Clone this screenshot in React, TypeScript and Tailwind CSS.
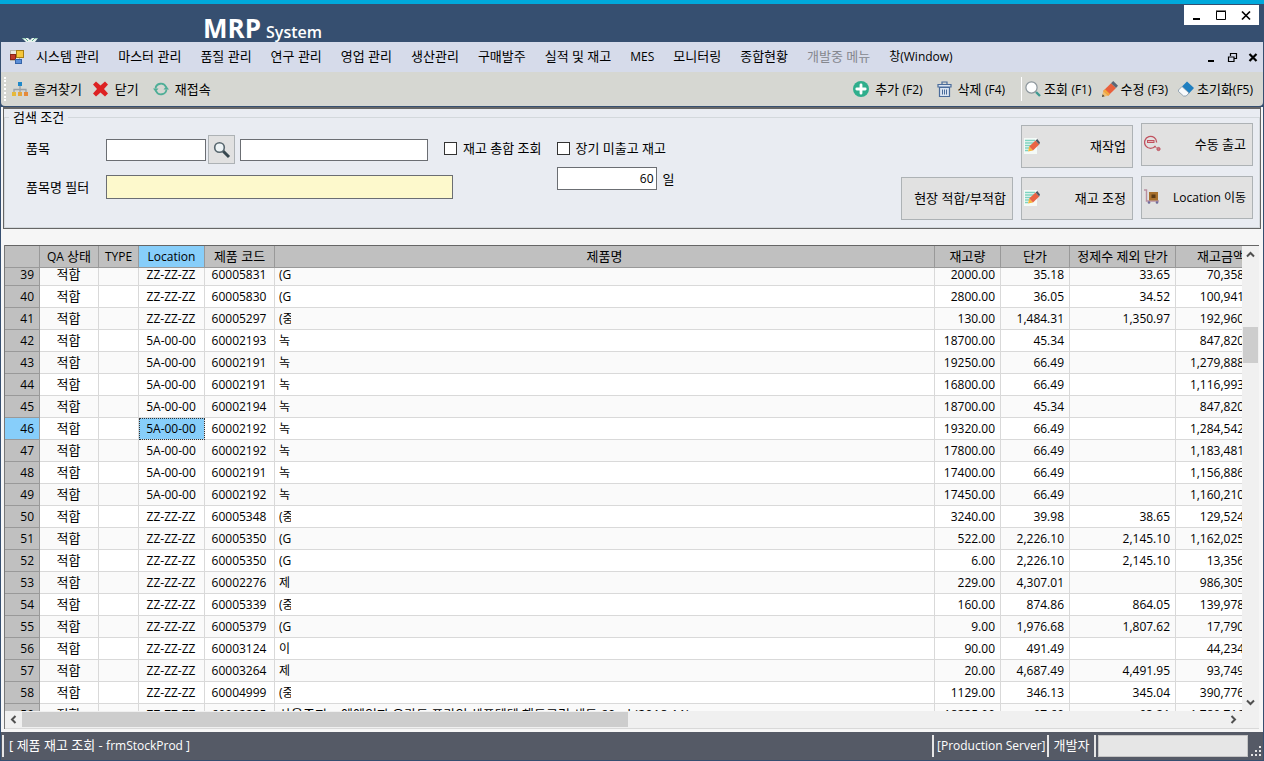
import { useLayoutEffect, useRef, type ReactNode } from "react";
import clsx from "clsx";

const FONT = "font-['Open_Sans','Noto_Sans_CJK_KR',sans-serif]";

const menus = [
    "시스템 관리", "마스터 관리", "품질 관리", "연구 관리", "영업 관리", "생산관리", "구매발주",
    "실적 및 재고", "MES", "모니터링", "종합현황", "개발중 메뉴", "창(Window)",
];

interface StockRow {
    no: number;
    location: string;
    code: string;
    name: string;
    qty: string;
    price: string;
    netPrice: string;
    amount: string;
}

const Z = "ZZ-ZZ-ZZ";
const A = "5A-00-00";

const rows: StockRow[] = [
    { no: 39, location: Z, code: "60005831", name: "(G", qty: "2000.00", price: "35.18", netPrice: "33.65", amount: "70,358.00" },
    { no: 40, location: Z, code: "60005830", name: "(G", qty: "2800.00", price: "36.05", netPrice: "34.52", amount: "100,941.00" },
    { no: 41, location: Z, code: "60005297", name: "(중", qty: "130.00", price: "1,484.31", netPrice: "1,350.97", amount: "192,960.00" },
    { no: 42, location: A, code: "60002193", name: "녹", qty: "18700.00", price: "45.34", netPrice: "", amount: "847,820.00" },
    { no: 43, location: A, code: "60002191", name: "녹", qty: "19250.00", price: "66.49", netPrice: "", amount: "1,279,888.00" },
    { no: 44, location: A, code: "60002191", name: "녹", qty: "16800.00", price: "66.49", netPrice: "", amount: "1,116,993.00" },
    { no: 45, location: A, code: "60002194", name: "녹", qty: "18700.00", price: "45.34", netPrice: "", amount: "847,820.00" },
    { no: 46, location: A, code: "60002192", name: "녹", qty: "19320.00", price: "66.49", netPrice: "", amount: "1,284,542.00" },
    { no: 47, location: A, code: "60002192", name: "녹", qty: "17800.00", price: "66.49", netPrice: "", amount: "1,183,481.00" },
    { no: 48, location: A, code: "60002191", name: "녹", qty: "17400.00", price: "66.49", netPrice: "", amount: "1,156,886.00" },
    { no: 49, location: A, code: "60002192", name: "녹", qty: "17450.00", price: "66.49", netPrice: "", amount: "1,160,210.00" },
    { no: 50, location: Z, code: "60005348", name: "(중", qty: "3240.00", price: "39.98", netPrice: "38.65", amount: "129,524.00" },
    { no: 51, location: Z, code: "60005350", name: "(G", qty: "522.00", price: "2,226.10", netPrice: "2,145.10", amount: "1,162,025.00" },
    { no: 52, location: Z, code: "60005350", name: "(G", qty: "6.00", price: "2,226.10", netPrice: "2,145.10", amount: "13,356.00" },
    { no: 53, location: Z, code: "60002276", name: "제", qty: "229.00", price: "4,307.01", netPrice: "", amount: "986,305.00" },
    { no: 54, location: Z, code: "60005339", name: "(중", qty: "160.00", price: "874.86", netPrice: "864.05", amount: "139,978.00" },
    { no: 55, location: Z, code: "60005379", name: "(G", qty: "9.00", price: "1,976.68", netPrice: "1,807.62", amount: "17,790.00" },
    { no: 56, location: Z, code: "60003124", name: "이", qty: "90.00", price: "491.49", netPrice: "", amount: "44,234.00" },
    { no: 57, location: Z, code: "60003264", name: "제", qty: "20.00", price: "4,687.49", netPrice: "4,491.95", amount: "93,749.00" },
    { no: 58, location: Z, code: "60004999", name: "(중", qty: "1129.00", price: "346.13", netPrice: "345.04", amount: "390,776.00" },
    { no: 59, location: Z, code: "60002235", name: "사용중지>. 엔엔인파 유라드 프라임 셀프텐텐 핸드크림 세트 60ml (2018.11)", qty: "18235.00", price: "97.60", netPrice: "93.21", amount: "1,780,716.00" },
];

const SELECTED = 46;

/* ---------- icons ---------- */

function AppIcon() {
    return (
        <svg width="15" height="14" viewBox="0 0 15 14">
            <rect x="0.5" y="0.5" width="9" height="10" fill="#ece9e2" stroke="#b9b5aa" />
            <rect x="6.5" y="0.5" width="7" height="7" fill="#f5c63b" stroke="#a67c14" />
            <rect x="0.5" y="4.5" width="5" height="5" fill="#c0392b" stroke="#8a2318" />
            <rect x="5.5" y="9.5" width="6" height="4" fill="#5b8fd8" stroke="#3564a8" />
        </svg>
    );
}

function SitemapIcon() {
    return (
        <svg width="16" height="16" viewBox="0 0 16 16">
            <path d="M8 5v6M2 11V8.500h12V11" fill="none" stroke="#9aa0a6" strokeWidth="1.300" />
            <rect x="6" y="1" width="4" height="4" fill="#1e88c9" />
            <rect x="0" y="11" width="4" height="4" fill="#e6b93b" />
            <rect x="6" y="11" width="4" height="4" fill="#e6a53b" />
            <rect x="12" y="11" width="4" height="4" fill="#e58a3a" />
        </svg>
    );
}

function CloseIcon() {
    return (
        <svg width="17" height="16" viewBox="0 0 17 16">
            <path d="M1 3.500 4 .5l4.500 4 4.500-4 3 3L12 8l4 4.500-3 3-4.500-4-4.500 4-3-3L5 8z" fill="#dd2222" />
        </svg>
    );
}

function ReconnectIcon() {
    return (
        <svg width="16" height="16" viewBox="0 0 16 16" fill="none" stroke="#4fae97" strokeWidth="1.800">
            <path d="M2.500 7.500a5.500 5.500 0 0 1 10.500-1.500M13.500 8.500a5.500 5.500 0 0 1-10.500 1.500" />
            <path d="M0 7.500h5.500L2.700 11zM16 8.500h-5.500l2.800-3.500z" fill="#4fae97" stroke="none" />
        </svg>
    );
}

function AddIcon() {
    return (
        <svg width="16" height="16" viewBox="0 0 16 16">
            <circle cx="8" cy="8" r="8" fill="#2fae8c" />
            <path d="M8 3.800v8.400M3.800 8h8.400" stroke="#fff" strokeWidth="2.800" strokeLinecap="round" />
        </svg>
    );
}

function TrashIcon() {
    return (
        <svg width="15" height="16" viewBox="0 0 15 16" fill="#dbe5f2" stroke="#4a6c9b">
            <path d="M2.500 6.500h10v9h-10z" strokeWidth="1.200" />
            <path d="M1 3.500h13v2.500H1z" strokeWidth="1.200" />
            <path d="M5 3V1h5v2" fill="none" strokeWidth="1.200" />
            <path d="M5.500 8.500v5M7.500 8.500v5M9.500 8.500v5" />
        </svg>
    );
}

function SearchIcon() {
    return (
        <svg width="16" height="16" viewBox="0 0 16 16">
            <path d="M11 11l4 4" stroke="#3f9a92" strokeWidth="2.400" />
            <circle cx="6.500" cy="6.500" r="5.600" fill="#fdfefe" stroke="#8c969c" strokeWidth="1.200" />
        </svg>
    );
}

function PencilIcon() {
    return (
        <svg width="16" height="16" viewBox="0 0 16 16">
            <path d="M0 16 1.200 10l5 4.800z" fill="#f0c070" />
            <path d="M0 16 .6 13.300l2 2z" fill="#444" />
            <path d="M1.200 10 9 2.200 14 7l-7.800 7.800z" fill="#e9603c" />
            <path d="M1.200 10 3 8.200 8 13l-1.800 1.800z" fill="#f3a93c" />
            <path d="M9 2.200 11.200 0 16 4.800 14 7z" fill="#5b6675" />
        </svg>
    );
}

function EraserIcon() {
    return (
        <svg width="16" height="16" viewBox="0 0 16 16">
            <path d="M9 .5 16 7l-5.500 6L3.500 6z" fill="#1f7fc0" />
            <path d="M4 5.500 11 12l-2.800 3H5.500L.5 10.500V9z" fill="#f7fafc" stroke="#7f93a3" strokeWidth=".8" />
        </svg>
    );
}

function LensIcon() {
    return (
        <svg width="18" height="18" viewBox="0 0 18 18">
            <path d="M10 10l6 6" stroke="#37474f" strokeWidth="3" />
            <circle cx="6.500" cy="6.500" r="4.800" fill="#eef4f6" stroke="#56656d" strokeWidth="1.600" />
        </svg>
    );
}

function NoteIcon() {
    return (
        <svg width="16" height="16" viewBox="0 0 16 16">
            <path d="M0 0h13v16H0z" fill="#f4faf7" />
            <path d="M1 2.500h10M1 5h9M1 7.500h7M1 10h4M1 12.500h3" stroke="#7ed3c0" strokeWidth="1.300" />
            <path d="M4 13.500 5.200 8.500 9 12.500z" fill="#f6b73c" />
            <path d="M5.200 8.500 11.500 2.500 15.200 6.400 9 12.500z" fill="#ea6443" />
            <path d="M11.500 2.500 13.300 1 16 4.500l-.8 1.900z" fill="#4f5662" />
        </svg>
    );
}

function ReleaseIcon() {
    return (
        <svg width="17" height="17" viewBox="0 0 17 17" fill="none" stroke="#c0525f">
            <path d="M11.500 10.800A6 6 0 1 1 12.600 7.500" strokeWidth="1.300" />
            <path d="M3 6.500h7.500" strokeWidth="3" />
            <path d="M4 6.500h5.500" stroke="#e7b5ba" />
            <circle cx="14.500" cy="14" r="1.600" fill="#c77a82" />
            <path d="M10.500 11l2 2" />
        </svg>
    );
}

function CartIcon() {
    return (
        <svg width="16" height="16" viewBox="0 0 16 16">
            <path d="M0 1h2.500v11H15" fill="none" stroke="#b98fa0" strokeWidth="1.400" />
            <rect x="5" y="3" width="9" height="8.500" fill="#a8702c" />
            <rect x="7.500" y="5.500" width="4" height="3.500" fill="#5b3a14" />
            <circle cx="5" cy="13.500" r="1.300" fill="#6f6b9a" />
            <circle cx="13" cy="13.500" r="1.300" fill="#6f6b9a" />
        </svg>
    );
}

function Chevron({ d }: { d: string }) {
    return (
        <svg width="9" height="9" viewBox="0 0 9 9">
            <path d={d} fill="none" stroke="#505050" strokeWidth="2" />
        </svg>
    );
}

/* ---------- parts ---------- */

function ToolButton({ icon, label, hotkey, gap = "gap-1.5" }: { icon: ReactNode; label: string; hotkey?: string; gap?: string }) {
    return (
        <button className={clsx("flex items-center whitespace-nowrap", gap)}>
            {icon}
            <span>
                {label}
                {hotkey && <span className="text-xs">{hotkey}</span>}
            </span>
        </button>
    );
}

function ActionButton({ icon, children }: { icon?: ReactNode; children: ReactNode }) {
    return (
        <button className="flex h-[43px] w-28 items-center border border-[#adb2b5] bg-[#e1e1e1] pr-1.5 pb-0.5 pl-0.5 whitespace-nowrap">
            {icon}
            <span className="flex-1 text-right">{children}</span>
        </button>
    );
}

function TitleBar() {
    return (
        <header className="flex h-[42px] shrink-0 items-start justify-between border-t-4 border-[#00a9dc] bg-[#364f70]">
            <div className="flex h-full items-end">
                <svg className="ml-[22px]" width="16" height="4" viewBox="0 0 16 4">
                    <path d="M0 0h6l2 2 2-2h6l-3 4H4z" fill="#e8f3ee" />
                    <path d="M0 0h3l3 3M16 0h-3l-3 3" fill="none" stroke="#59a58a" />
                </svg>
                <h1 className="ml-[165px] flex items-baseline gap-[5px] text-[26px] leading-7 font-bold text-white">
                    MRP <span className="text-base leading-5 font-semibold">System</span>
                </h1>
            </div>
            <div className="mt-px mr-[5px] flex h-5 w-[75px] items-center justify-around bg-white">
                <button aria-label="최소화">
                    <svg width="11" height="11" viewBox="0 0 11 11"><path d="M2 9h7" stroke="#000" strokeWidth="2" /></svg>
                </button>
                <button aria-label="최대화">
                    <svg width="11" height="11" viewBox="0 0 11 11"><path d="M.5 1.500h9v8h-9zM0 1h10" fill="none" stroke="#000" /></svg>
                </button>
                <button aria-label="닫기">
                    <svg width="11" height="11" viewBox="0 0 11 11"><path d="M1 1.500l8 8M9 1.500l-8 8" stroke="#000" strokeWidth="1.700" /></svg>
                </button>
            </div>
        </header>
    );
}

function MenuBar() {
    return (
        <nav className="flex h-[30px] shrink-0 items-center bg-[#d6dbea] pl-[9px]">
            <AppIcon />
            <ul className="ml-[11px] flex flex-1 gap-[19px] pb-0.5 whitespace-nowrap">
                {menus.map((menu) => (
                    <li key={menu}>
                        <button
                            disabled={menu === "개발중 메뉴"}
                            className={clsx("disabled:text-[#85878e]", /[A-Z]/.test(menu) && "text-xs")}
                        >
                            {menu}
                        </button>
                    </li>
                ))}
            </ul>
            <div className="flex gap-2.5 pr-[5px]">
                <button aria-label="창 최소화">
                    <svg width="11" height="11" viewBox="0 0 11 11"><path d="M2 9h6" stroke="#000" strokeWidth="2" /></svg>
                </button>
                <button aria-label="창 복원">
                    <svg width="11" height="11" viewBox="0 0 11 11"><path d="M3.500 4V1.500h6v5H7M3 1.500h7M1.500 5h5.500v4.500H1.500zM1 5h6.500" fill="none" stroke="#000" strokeWidth="1.200" /></svg>
                </button>
                <button aria-label="창 닫기">
                    <svg width="10" height="11" viewBox="0 0 10 11"><path d="M1.500 2l7 7M8.500 2l-7 7" stroke="#000" strokeWidth="2.200" /></svg>
                </button>
            </div>
        </nav>
    );
}

function ToolBar() {
    return (
        <div className="flex h-[34px] shrink-0 items-center rounded-b-sm bg-[#d6d7d2] pr-2.5 pb-px pl-[3px]">
            <div className="mr-1.5 h-6 border-l-2 border-dotted border-white" />
            <div className="flex flex-1 items-center">
                <ToolButton icon={<SitemapIcon />} label="즐겨찾기" />
                <div className="ml-2.5"><ToolButton icon={<CloseIcon />} label="닫기" /></div>
                <div className="ml-3.5"><ToolButton icon={<ReconnectIcon />} label="재접속" /></div>
            </div>
            <div className="flex items-center gap-3.5">
                <ToolButton icon={<AddIcon />} label="추가 " hotkey="(F2)" />
                <ToolButton icon={<TrashIcon />} label="삭제 " hotkey="(F4)" />
            </div>
            <div className="mr-[3px] ml-4 h-6 w-px bg-white" />
            <div className="flex items-center gap-2.5">
                <ToolButton icon={<SearchIcon />} label="조회 " hotkey="(F1)" gap="gap-[3px]" />
                <ToolButton icon={<PencilIcon />} label="수정 " hotkey="(F3)" gap="gap-[3px]" />
                <ToolButton icon={<EraserIcon />} label="초기화" hotkey="(F5)" gap="gap-[3px]" />
            </div>
        </div>
    );
}

const inputStyle = "border border-[#6b6e73] bg-white outline-none";
const checkStyle = "size-[13px] appearance-none border border-[#333] bg-white checked:bg-[#333]";

function SearchPanel() {
    return (
        <section className="shrink-0 border border-t-2 border-[#666] bg-[#e9ecf2]">
            <fieldset className="border border-[#d3d8dc] pb-[7px]">
                <legend className="ml-1 px-1 leading-[17px]">검색 조건</legend>
                <div className="-mt-[3px] flex items-start pr-1.5 pl-[21px]">
                    <div className="flex flex-col gap-[11px] pt-3">
                        <div className="flex h-[29px] items-center">
                            <label htmlFor="item" className="w-20 pb-1">품목</label>
                            <input id="item" className={clsx(inputStyle, "h-[22px] w-[100px] px-1")} />
                            <button aria-label="품목 검색" className="mx-0.5 flex h-[29px] w-[27px] items-center justify-center border border-[#adb2b5] bg-[#e1e1e1]">
                                <LensIcon />
                            </button>
                            <input aria-label="품목명" className={clsx(inputStyle, "ml-[3px] h-[22px] w-[188px] px-1")} />
                        </div>
                        <div className="flex h-6 items-center">
                            <label htmlFor="filter" className="w-20">품목명 필터</label>
                            <input id="filter" className="h-6 w-[347px] border border-[#6b6e73] bg-[#fdf9cc] px-1 outline-none" />
                        </div>
                    </div>
                    <label className="-ml-[9px] flex h-9 items-center gap-1.5 pt-3.5 whitespace-nowrap">
                        <input type="checkbox" className={checkStyle} />
                        재고 총합 조회
                    </label>
                    <div className="ml-[15px] flex flex-col gap-[9px] pt-[15px]">
                        <label className="flex h-5 items-center gap-1.5 whitespace-nowrap">
                            <input type="checkbox" className={checkStyle} />
                            장기 미출고 재고
                        </label>
                        <label className="flex items-center gap-1.5">
                            <input defaultValue="60" className={clsx(inputStyle, "h-[23px] w-[100px] pr-0.5 text-right text-xs")} />
                            일
                        </label>
                    </div>
                    <div className="ml-auto flex items-end gap-2">
                        <ActionButton>현장 적합/부적합</ActionButton>
                        <div className="flex flex-col gap-[9px] pt-0.5">
                            <ActionButton icon={<NoteIcon />}>재작업</ActionButton>
                            <ActionButton icon={<NoteIcon />}>재고 조정</ActionButton>
                        </div>
                        <div className="flex flex-col gap-2.5 self-start">
                            <ActionButton icon={<ReleaseIcon />}>수동 출고</ActionButton>
                            <ActionButton icon={<CartIcon />}><span className="text-xs">Location 이동</span></ActionButton>
                        </div>
                    </div>
                </div>
            </fieldset>
        </section>
    );
}

const cell = "h-[22px] overflow-hidden border-r border-b border-[#d9d9d9] p-0 whitespace-nowrap";
const centerCell = clsx(cell, "pr-px! text-center");
const numberCell = clsx(cell, "pr-[5px]! text-right");
const headCell = "h-[22px] overflow-hidden border-r border-b border-[#999] bg-[#c0c0c0] p-0 font-normal whitespace-nowrap";

function StockTable() {
    const scroller = useRef<HTMLDivElement>(null);

    useLayoutEffect(() => {
        // the list rests a few pixels into its first row
        if (scroller.current) scroller.current.scrollTop = 4;
    }, []);

    return (
        <div ref={scroller} className="min-h-0 min-w-0 flex-1 overflow-hidden">
            <table className="w-[calc(100%+25px)] table-fixed border-separate border-spacing-0 leading-[21px]">
                <thead className="sticky top-0 z-10">
                    <tr>
                        <th className={clsx(headCell, "w-[35px]")} />
                        <th className={clsx(headCell, "w-[59px]")}><span className="text-xs">QA </span>상태</th>
                        <th className={clsx(headCell, "w-10 text-xs")}>TYPE</th>
                        <th className={clsx(headCell, "w-[66px] bg-[#87cefa]! text-xs")}>Location</th>
                        <th className={clsx(headCell, "w-[70px]")}>제품 코드</th>
                        <th className={headCell}>제품명</th>
                        <th className={clsx(headCell, "w-[66px]")}>재고량</th>
                        <th className={clsx(headCell, "w-[69px]")}>단가</th>
                        <th className={clsx(headCell, "w-[106px]")}>정제수 제외 단가</th>
                        <th className={clsx(headCell, "w-[91px]")}>재고금액</th>
                    </tr>
                </thead>
                <tbody className="text-xs leading-[21px]">
                    {rows.map((row) => (
                        <tr key={row.no} className="bg-white odd:bg-[#fafafa]">
                            <th className={clsx(headCell, "pr-[5px]! text-right", row.no === SELECTED && "bg-[#87cefa]!")}>{row.no}</th>
                            <td className={clsx(centerCell, "text-[13px]")}>적합</td>
                            <td className={cell} />
                            <td className={clsx(centerCell, row.no === SELECTED && "bg-[#87cefa] outline-1 -outline-offset-1 outline-dotted outline-[#333]")}>
                                {row.location}
                            </td>
                            <td className={centerCell}>{row.code}</td>
                            <td className={cell}>
                                <div className={clsx("ml-1 h-[21px] overflow-hidden", row.name.length < 3 ? "w-3" : "text-[13px]")}>{row.name}</div>
                            </td>
                            <td className={numberCell}>{row.qty}</td>
                            <td className={numberCell}>{row.price}</td>
                            <td className={numberCell}>{row.netPrice}</td>
                            <td className={numberCell}>{row.amount}</td>
                        </tr>
                    ))}
                </tbody>
            </table>
        </div>
    );
}

function StockGrid() {
    return (
        <section className="flex min-h-0 flex-1 flex-col border-t border-b border-t-[#666] border-b-[#d9d9d9] bg-[#f0f0f0]">
            <div className="flex min-h-0 flex-1">
                <StockTable />
                <div className="flex w-[17px] flex-col items-center justify-between bg-[#f0f0f0] py-1">
                    <Chevron d="M1 6.500 4.500 3 8 6.500" />
                    <div className="mt-[68px] mb-auto h-9 w-[15px] bg-[#cdcdcd]" />
                    <Chevron d="M1 2.500 4.500 6 8 2.500" />
                </div>
            </div>
            <div className="flex h-[17px] shrink-0 items-center">
                <div className="flex w-[17px] justify-center"><Chevron d="M6.500 1 3 4.500 6.500 8" /></div>
                <div className="flex h-[15px] flex-1">
                    <div className="w-[606px] bg-[#cdcdcd]" />
                </div>
                <div className="mr-[17px] flex w-[17px] justify-center"><Chevron d="M2.500 1 6 4.500 2.500 8" /></div>
            </div>
        </section>
    );
}

function StatusBar() {
    return (
        <footer className="flex h-7 shrink-0 items-center bg-[#555a66] pl-px text-xs text-white">
            <span className="flex h-[22px] flex-1 items-center border-l-2 border-[#e6e6e6] pl-[5px]">
                <span><span className="text-[13px]">[ 제품 재고 조회 - </span>frmStockProd ]</span>
            </span>
            <span className="flex h-[22px] w-[115px] items-center border-l-2 border-[#e6e6e6] pl-[3px] whitespace-nowrap">[Production Server]</span>
            <span className="flex h-[22px] w-[49px] items-center justify-center border-x-2 border-[#e6e6e6] text-[13px]">개발자</span>
            <div className="ml-0.5 h-[22px] w-[150px] border border-[#c4c4c4] bg-[#e6e6e6]" />
            <svg className="ml-[3px] self-end" width="12" height="14" viewBox="0 0 12 14" fill="#e6e6e6">
                <path d="M8 0h2v2H8zM4 4h2v2H4zM8 4h2v2H8zM0 8h2v2H0zM4 8h2v2H4zM8 8h2v2H8z" />
            </svg>
        </footer>
    );
}

export default function App() {
    return (
        <div className={clsx("flex h-screen flex-col overflow-hidden bg-[#364f70] pb-px text-[13px] leading-5 text-black", FONT)}>
            <TitleBar />
            <div className="mr-px ml-px flex min-h-0 flex-1 flex-col">
                <MenuBar />
                <ToolBar />
                <main className="mt-px flex min-h-0 flex-1 flex-col bg-[#f6f6f6] px-px pb-[3px]">
                    <div className="px-px"><SearchPanel /></div>
                    <div className="h-4 shrink-0" />
                    <div className="mr-[3px] ml-0.5 flex min-h-0 flex-1 flex-col border-l border-[#777]">
                        <StockGrid />
                    </div>
                </main>
                <StatusBar />
            </div>
        </div>
    );
}
